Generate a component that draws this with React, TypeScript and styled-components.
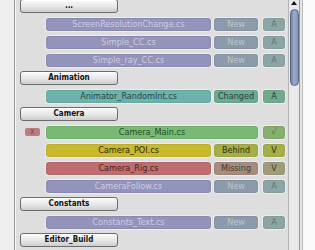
import styled, { createGlobalStyle } from 'styled-components';

const GlobalStyle = createGlobalStyle`
  html, body {
    margin: 0;
    padding: 0;
    background: #f7f7f7;
    overflow: hidden;
  }
  body {
    font-family: "DejaVu Sans Condensed", "DejaVu Sans", sans-serif;
  }
`;

type Tone = 'added' | 'changed' | 'synced' | 'behind' | 'missing';

type Palette = {
  bar: string;
  barText: string;
  status: string;
  statusText: string;
  mark: string;
  markText: string;
};

const palettes: Record<Tone, Palette> = {
  added: {
    bar: '#9393bb',
    barText: '#cdcde2',
    status: '#8c9bab',
    statusText: '#bcc7cf',
    mark: '#8ca5a5',
    markText: '#5c7474',
  },
  changed: {
    bar: '#6eb2ac',
    barText: '#234744',
    status: '#6ea896',
    statusText: '#224438',
    mark: '#73aa8e',
    markText: '#223f33',
  },
  synced: {
    bar: '#78b973',
    barText: '#2a4f28',
    status: '#78b973',
    statusText: '#2a4f28',
    mark: '#87af6e',
    markText: '#55784a',
  },
  behind: {
    bar: '#c8b92d',
    barText: '#2e2a00',
    status: '#a5af46',
    statusText: '#2d3210',
    mark: '#a5af46',
    markText: '#2d3210',
  },
  missing: {
    bar: '#be6e6e',
    barText: '#4a1e1e',
    status: '#a58c7d',
    statusText: '#4a3a32',
    mark: '#a09b78',
    markText: '#3e3a28',
  },
};

type Entry =
  | { kind: 'folder'; name: string }
  | {
      kind: 'file';
      name: string;
      tone: Tone;
      status?: string;
      mark: string;
      badge?: string;
    };

const entries: Entry[] = [
  { kind: 'folder', name: '...' },
  { kind: 'file', name: 'ScreenResolutionChange.cs', tone: 'added', status: 'New', mark: 'A' },
  { kind: 'file', name: 'Simple_CC.cs', tone: 'added', status: 'New', mark: 'A' },
  { kind: 'file', name: 'Simple_ray_CC.cs', tone: 'added', status: 'New', mark: 'A' },
  { kind: 'folder', name: 'Animation' },
  { kind: 'file', name: 'Animator_RandomInt.cs', tone: 'changed', status: 'Changed', mark: 'A' },
  { kind: 'folder', name: 'Camera' },
  { kind: 'file', name: 'Camera_Main.cs', tone: 'synced', mark: '√', badge: 'X' },
  { kind: 'file', name: 'Camera_POI.cs', tone: 'behind', status: 'Behind', mark: 'V' },
  { kind: 'file', name: 'Camera_Rig.cs', tone: 'missing', status: 'Missing', mark: 'V' },
  { kind: 'file', name: 'CameraFollow.cs', tone: 'added', status: 'New', mark: 'A' },
  { kind: 'folder', name: 'Constants' },
  { kind: 'file', name: 'Constants_Text.cs', tone: 'added', status: 'New', mark: 'A' },
  { kind: 'folder', name: 'Editor_Build' },
];

const Window = styled.div`
  display: flex;
  width: 315px;
  height: 250px;
  overflow: hidden;
`;

const Gutter = styled.div`
  width: 14px;
  flex-shrink: 0;
  background: #efefef;
  border-right: 1px solid #9c9c9c;
`;

const Panel = styled.div`
  width: 268px;
  flex-shrink: 0;
  background: #dedede;
  border-left: 1px solid #f6f6f6;
  display: flex;
  flex-direction: column;
  gap: 4px;
  margin-top: -1px;
  padding-left: 4px;
`;

const Row = styled.div`
  display: flex;
  align-items: center;
  height: 14px;
  flex-shrink: 0;
`;

const FolderButton = styled.div`
  width: 96px;
  height: 12px;
  border: 1px solid #6c6c6c;
  border-radius: 3px;
  background: linear-gradient(#fbfbfb, #e6e6e6 55%, #cdcdcd);
  color: #111;
  font-size: 8px;
  font-weight: bold;
  line-height: 12px;
  text-align: center;
  box-shadow: inset 0 1px 0 #ffffff;
`;

const BadgeSlot = styled.div`
  width: 26px;
  flex-shrink: 0;
  display: flex;
  padding-left: 5px;
  box-sizing: border-box;
`;

const Badge = styled.div`
  width: 15px;
  height: 8px;
  border-radius: 2px;
  background: #b97d7d;
  color: #6e3a3a;
  font-size: 7px;
  line-height: 8px;
  text-align: center;
`;

const Cell = styled.div<{ $bg: string; $fg: string; $width?: number }>`
  height: 13px;
  flex: ${(p) => (p.$width ? `0 0 ${p.$width}px` : '1')};
  min-width: 0;
  background: ${(p) => p.$bg};
  color: ${(p) => p.$fg};
  border-radius: 3px;
  box-shadow: 0 0 0 1px rgba(255, 255, 255, 0.45), inset 0 0 0 1px rgba(0, 0, 0, 0.06);
  font-size: 9px;
  line-height: 13px;
  text-align: center;
  white-space: nowrap;
  overflow: hidden;
`;

const Cells = styled.div`
  flex: 1;
  display: flex;
  gap: 3px;
  padding-right: 3px;
  & > :last-child:not(:first-child) {
    margin-left: 2px;
  }
`;

const Scrollbar = styled.div`
  width: 10px;
  flex-shrink: 0;
  background: #e9e9e9;
  border-left: 1px solid #b4b4b4;
  border-right: 1px solid #9a9a9a;
  display: flex;
  flex-direction: column;
  align-items: center;
`;

const Arrow = styled.div`
  width: 0;
  height: 0;
  margin-top: 1px;
  border-left: 3px solid transparent;
  border-right: 3px solid transparent;
  border-bottom: 4px solid #111;
`;

const Thumb = styled.div`
  width: 9px;
  height: 77px;
  margin-top: 4px;
  border: 1px solid #566784;
  border-radius: 5px;
  box-sizing: border-box;
  background: linear-gradient(90deg, #6f82a6, #9aabcb 45%, #8296ba);
`;

const Edge = styled.div`
  flex: 1;
  display: flex;
  background: #fafafa;
  &::before {
    content: '';
    width: 2px;
    background: #e4e4e4;
    border-right: 1px solid #bdbdbd;
  }
`;

function FileRow({ entry }: { entry: Extract<Entry, { kind: 'file' }> }) {
  const p = palettes[entry.tone];
  return (
    <Row>
      <BadgeSlot>{entry.badge && <Badge>{entry.badge}</Badge>}</BadgeSlot>
      <Cells>
        <Cell $bg={p.bar} $fg={p.barText}>
          {entry.name}
        </Cell>
        {entry.status && (
          <Cell $bg={p.status} $fg={p.statusText} $width={44}>
            {entry.status}
          </Cell>
        )}
        <Cell $bg={p.mark} $fg={p.markText} $width={22}>
          {entry.mark}
        </Cell>
      </Cells>
    </Row>
  );
}

export default function App() {
  return (
    <>
      <GlobalStyle />
      <Window>
        <Gutter />
        <Panel>
          {entries.map((e, i) =>
            e.kind === 'folder' ? (
              <Row key={i}>
                <FolderButton>{e.name}</FolderButton>
              </Row>
            ) : (
              <FileRow key={i} entry={e} />
            )
          )}
        </Panel>
        <Scrollbar>
          <Arrow />
          <Thumb />
        </Scrollbar>
        <Edge />
      </Window>
    </>
  );
}
